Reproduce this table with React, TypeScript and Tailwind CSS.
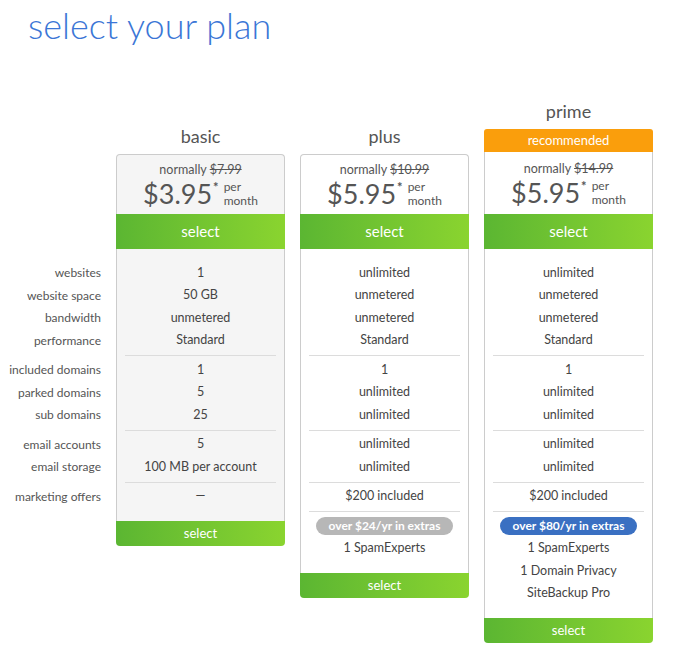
import React from "react";

type Plan = {
  name: string;
  was: string;
  price: string;
  grey?: boolean;
  recommended?: boolean;
  groups: string[][];
  extras?: { pill: string; blue?: boolean; items: string[] };
};

const labels = [
  ["websites", "website space", "bandwidth", "performance"],
  ["included domains", "parked domains", "sub domains"],
  ["email accounts", "email storage"],
  ["marketing offers"],
];

const plans: Plan[] = [
  {
    name: "basic",
    was: "$7.99",
    price: "$3.95",
    grey: true,
    groups: [
      ["1", "50 GB", "unmetered", "Standard"],
      ["1", "5", "25"],
      ["5", "100 MB per account"],
      ["—"],
    ],
  },
  {
    name: "plus",
    was: "$10.99",
    price: "$5.95",
    groups: [
      ["unlimited", "unmetered", "unmetered", "Standard"],
      ["1", "unlimited", "unlimited"],
      ["unlimited", "unlimited"],
      ["$200 included"],
    ],
    extras: { pill: "over $24/yr in extras", items: ["1 SpamExperts"] },
  },
  {
    name: "prime",
    was: "$14.99",
    price: "$5.95",
    recommended: true,
    groups: [
      ["unlimited", "unmetered", "unmetered", "Standard"],
      ["1", "unlimited", "unlimited"],
      ["unlimited", "unlimited"],
      ["$200 included"],
    ],
    extras: {
      pill: "over $80/yr in extras",
      blue: true,
      items: ["1 SpamExperts", "1 Domain Privacy", "SiteBackup Pro"],
    },
  },
];

const Divider = () => <div className="mx-2 my-[3px] h-px bg-[#dcdcdc]" />;

const Row = ({ children }: { children: React.ReactNode }) => (
  <div className="flex h-[22.5px] items-center justify-center">{children}</div>
);

const PlanCard = ({ plan }: { plan: Plan }) => (
  <div className={`flex w-[169px] flex-col ${plan.recommended ? "" : "mt-[25px]"}`}>
    <div className="flex h-8 items-center justify-center pb-1 text-[18px] text-[#555]">
      {plan.name}
    </div>
    {plan.recommended && (
      <div className="flex h-[23px] items-center justify-center rounded-t-[3px] bg-[#fa9e0c] text-[13px] text-white">
        recommended
      </div>
    )}
    <div
      className={`flex flex-col border-x border-[#cccccc] ${plan.recommended ? "h-[62px] pt-[9px]" : "h-[60px] rounded-t-[4px] border-t pt-[7px]"} ${
        plan.grey ? "bg-[#f5f5f5]" : "bg-white"
      }`}
    >
      <div className="flex flex-col items-center">
        <div className="text-[12.5px] leading-4 text-[#555]">
          normally <span className="line-through">{plan.was}</span>
        </div>
        <div className="flex items-start">
          <span className="text-[27px] leading-[31px] text-[#555]">{plan.price}</span>
          <span className="ml-[1px] mt-[3px] text-[13px] font-bold leading-3 text-[#555]">*</span>
          <div className="ml-[5px] mt-[2px] flex flex-col text-[12px] leading-[14px] text-[#555]">
            <span>per</span>
            <span>month</span>
          </div>
        </div>
      </div>
    </div>
    <div className="flex h-[35px] items-center justify-center bg-gradient-to-r from-[#5bb632] to-[#8ad42f] text-[15px] text-white">
      select
    </div>
    <div
      className={`flex flex-col border-x border-[#cccccc] pb-[13px] pt-[13px] text-[12.5px] text-[#444] ${
        plan.grey ? "bg-[#f5f5f5]" : "bg-white"
      }`}
    >
      {plan.groups.map((g, i) => (
        <React.Fragment key={i}>
          {i > 0 && <Divider />}
          {g.map((v, j) => (
            <Row key={j}>{v}</Row>
          ))}
        </React.Fragment>
      ))}
      {plan.extras && (
        <>
          <Divider />
          <Row>
            <span
              className={`flex h-[18px] w-[137px] items-center justify-center rounded-full text-[12px] font-bold text-white ${
                plan.extras.blue ? "bg-[#3a70c2]" : "bg-[#b7b7b7]"
              }`}
            >
              {plan.extras.pill}
            </span>
          </Row>
          {plan.extras.items.map((v) => (
            <Row key={v}>{v}</Row>
          ))}
        </>
      )}
    </div>
    <div className="flex h-[25px] items-center justify-center rounded-b-[4px] bg-gradient-to-r from-[#5bb632] to-[#8ad42f] text-[13px] text-white">
      select
    </div>
  </div>
);

export default function App() {
  return (
    <div
      className="min-h-[654px] w-[688px] bg-white"
      style={{ fontFamily: "Lato, 'Open Sans', sans-serif" }}
    >
      <h1 className="pl-[28px] pt-[3px] text-[36px] font-light leading-[44px] text-[#3b76d6]">
        select your plan
      </h1>
      <div className="mt-[50px] flex gap-[15px]">
        <div className="flex w-[101px] flex-col pt-[165px] text-right text-[12px] text-[#555]">
          {labels.map((g, i) => (
            <React.Fragment key={i}>
              {i > 0 && <div className="my-[3px] h-px" />}
              {g.map((l) => (
                <div key={l} className="flex h-[22.5px] items-center justify-end">
                  {l}
                </div>
              ))}
            </React.Fragment>
          ))}
        </div>
        {plans.map((p) => (
          <PlanCard key={p.name} plan={p} />
        ))}
      </div>
    </div>
  );
}
